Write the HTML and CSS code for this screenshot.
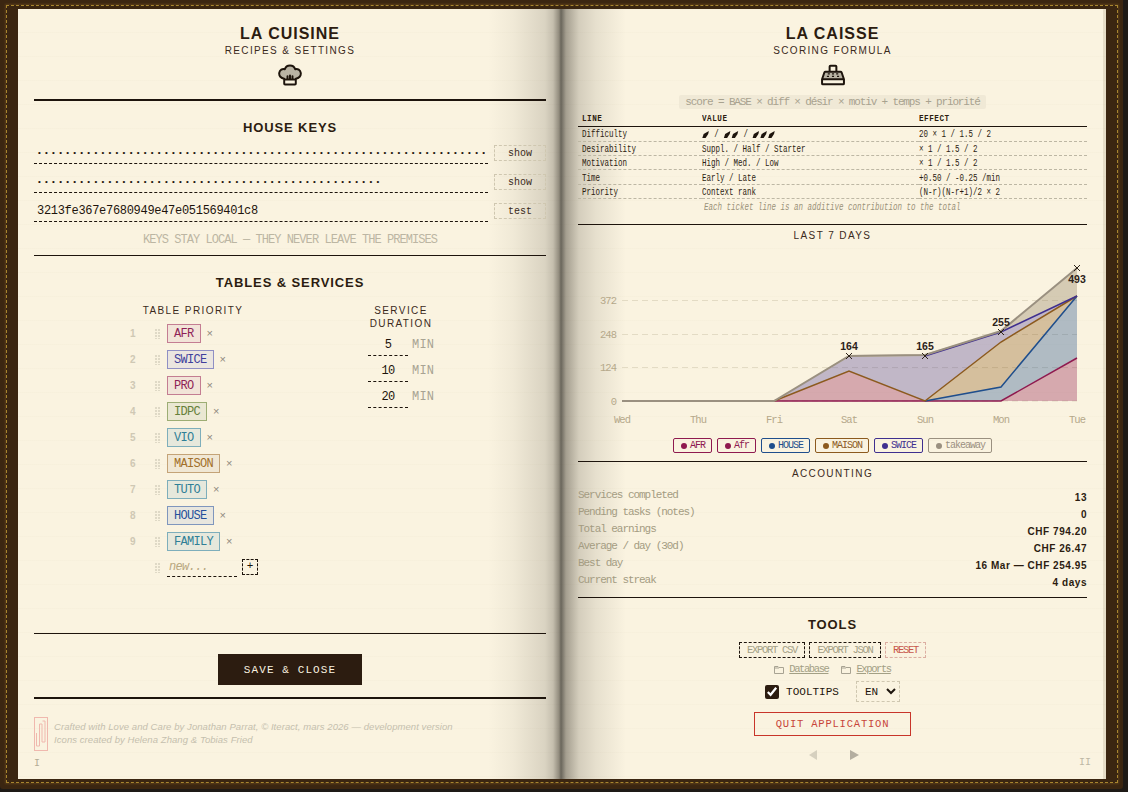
FILE: index.html
```html
<!DOCTYPE html>
<html lang="en">
<head>
<meta charset="utf-8">
<title>La Cuisine / La Caisse</title>
<link rel="stylesheet" href="styles.css">
</head>
<body>
<div class="book">
  <div class="stitch"></div>
  <div class="paper">
    <section class="page page-left">
      <h1 class="title">LA CUISINE</h1>
      <p class="subtitle">RECIPES &amp; SETTINGS</p>
      <svg class="page-icon" viewBox="12 22 232 204" width="24" height="24">
        <path class="band" d="M72 160H184V208A8 8 0 0 1 176 216H80A8 8 0 0 1 72 208Z"/>
        <path class="duo" d="M72 160C40 156 20 132 24 104C28 76 54 60 78 68C86 42 106 32 128 32C150 32 170 42 178 68C202 60 228 76 232 104C236 132 216 156 184 160Z"/>
        <path class="ico" d="M72 160C40 156 20 132 24 104C28 76 54 60 78 68C86 42 106 32 128 32C150 32 170 42 178 68C202 60 228 76 232 104C236 132 216 156 184 160V208A8 8 0 0 1 176 216H80A8 8 0 0 1 72 208ZM72 168H184M104 136V160M128 128V160M152 136V160"/>
      </svg>
      <div class="rule-thick"></div>

      <h2 class="section-head keys-head">HOUSE KEYS</h2>
      <div class="keys">
        <div class="key-row">
          <input class="key-input key-secret" type="password" value="aaaaaaaaaaaaaaaaaaaaaaaaaaaaaaaaaaaaaaaaaaaaaaaaaaaaaaaaaaaaaaaa">
          <button class="key-btn">show</button>
        </div>
        <div class="key-row">
          <input class="key-input key-secret" type="password" value="aaaaaaaaaaaaaaaaaaaaaaaaaaaaaaaaaaaaaaaaaaaaaaaaa">
          <button class="key-btn">show</button>
        </div>
        <div class="key-row">
          <input class="key-input" type="text" value="3213fe367e7680949e47e051569401c8">
          <button class="key-btn">test</button>
        </div>
      </div>
      <p class="keys-note">KEYS STAY LOCAL — THEY NEVER LEAVE THE PREMISES</p>
      <div class="rule-thin keys-rule"></div>

      <h2 class="section-head tables-head">TABLES &amp; SERVICES</h2>
      <div class="tables">
        <div class="priority">
          <h3 class="mini-head">TABLE PRIORITY</h3>
          <ol class="prio-list">
            <li class="prio-row"><span class="num">1</span><span class="grip"></span><span class="tag c-afr">AFR</span><span class="x">×</span></li>
            <li class="prio-row"><span class="num">2</span><span class="grip"></span><span class="tag c-swice">SWICE</span><span class="x">×</span></li>
            <li class="prio-row"><span class="num">3</span><span class="grip"></span><span class="tag c-afr">PRO</span><span class="x">×</span></li>
            <li class="prio-row"><span class="num">4</span><span class="grip"></span><span class="tag c-idpc">IDPC</span><span class="x">×</span></li>
            <li class="prio-row"><span class="num">5</span><span class="grip"></span><span class="tag c-teal">VIO</span><span class="x">×</span></li>
            <li class="prio-row"><span class="num">6</span><span class="grip"></span><span class="tag c-maison">MAISON</span><span class="x">×</span></li>
            <li class="prio-row"><span class="num">7</span><span class="grip"></span><span class="tag c-teal">TUTO</span><span class="x">×</span></li>
            <li class="prio-row"><span class="num">8</span><span class="grip"></span><span class="tag c-house">HOUSE</span><span class="x">×</span></li>
            <li class="prio-row"><span class="num">9</span><span class="grip"></span><span class="tag c-teal">FAMILY</span><span class="x">×</span></li>
            <li class="prio-row"><span class="num"></span><span class="grip"></span><input class="new-input" placeholder="new..."><button class="add-btn">+</button></li>
          </ol>
        </div>
        <div class="durations">
          <h3 class="mini-head">SERVICE<br>DURATION</h3>
          <div class="dur-list">
            <div class="dur-row"><input class="dur-input" value="5"><span class="dur-unit">MIN</span></div>
            <div class="dur-row"><input class="dur-input" value="10"><span class="dur-unit">MIN</span></div>
            <div class="dur-row"><input class="dur-input" value="20"><span class="dur-unit">MIN</span></div>
          </div>
        </div>
      </div>
      <div class="rule-thin save-rule"></div>
      <button class="save-btn">SAVE &amp; CLOSE</button>
      <div class="rule-thick foot-rule"></div>
      <footer class="credits">
        <svg class="logo" viewBox="0 0 14 34" width="14" height="34">
          <rect x="0.5" y="0.5" width="13" height="33"/>
          <path d="M5.5 7V29H2.5V16M5.5 7H8V25H11V4H8.5"/>
        </svg>
        <p class="credit-text">Crafted with Love and Care by Jonathan Parrat, © Iteract, mars 2026 — development version<br>Icons created by Helena Zhang &amp; Tobias Fried</p>
      </footer>
      <div class="folio">I</div>
    </section>

    <section class="page page-right">
      <h1 class="title">LA CAISSE</h1>
      <p class="subtitle">SCORING FORMULA</p>
      <svg class="page-icon" viewBox="14 30 228 196" width="24" height="24">
        <path class="band" d="M24 168H232V208A8 8 0 0 1 224 216H32A8 8 0 0 1 24 208Z"/>
        <path class="duo" d="M56 96H200L232 168H24Z"/>
        <path class="ico" d="M56 96H200C206 96 208 100 210 104L232 168V208A8 8 0 0 1 224 216H32A8 8 0 0 1 24 208V168L46 104C48 100 50 96 56 96ZM24 168H232M96 96V48A8 8 0 0 1 104 40H152A8 8 0 0 1 160 48V96"/>
        <path class="keys-dots" d="M78 112h20v12h-20zM118 112h20v12h-20zM158 112h20v12h-20zM70 136h20v12h-20zM118 136h20v12h-20zM166 136h20v12h-20z"/>
      </svg>
      <div class="formula-wrap"><code class="formula">score = BASE × diff × désir × motiv + temps + priorité</code></div>

      <table class="score">
        <thead>
          <tr><th><span>LINE</span></th><th><span>VALUE</span></th><th><span>EFFECT</span></th></tr>
        </thead>
        <tbody>
          <tr><td><span>Difficulty</span></td><td><span><svg class="pep" viewBox="0 0 11 7" width="12" height="7"><path d="M0 7L2 3L10 0L9 3L5 7Z"/></svg> / <svg class="pep" viewBox="0 0 11 7" width="12" height="7"><path d="M0 7L2 3L10 0L9 3L5 7Z"/></svg><svg class="pep" viewBox="0 0 11 7" width="12" height="7"><path d="M0 7L2 3L10 0L9 3L5 7Z"/></svg> / <svg class="pep" viewBox="0 0 11 7" width="12" height="7"><path d="M0 7L2 3L10 0L9 3L5 7Z"/></svg><svg class="pep" viewBox="0 0 11 7" width="12" height="7"><path d="M0 7L2 3L10 0L9 3L5 7Z"/></svg><svg class="pep" viewBox="0 0 11 7" width="12" height="7"><path d="M0 7L2 3L10 0L9 3L5 7Z"/></svg></span></td><td><span>20 × 1 / 1.5 / 2</span></td></tr>
          <tr><td><span>Desirability</span></td><td><span>Suppl. / Half / Starter</span></td><td><span>× 1 / 1.5 / 2</span></td></tr>
          <tr><td><span>Motivation</span></td><td><span>High / Med. / Low</span></td><td><span>× 1 / 1.5 / 2</span></td></tr>
          <tr><td><span>Time</span></td><td><span>Early / Late</span></td><td><span>+0.50 / -0.25 /min</span></td></tr>
          <tr><td><span>Priority</span></td><td><span>Context rank</span></td><td><span>(N-r)(N-r+1)/2 × 2</span></td></tr>
        </tbody>
      </table>
      <p class="score-note"><span>Each ticket line is an additive contribution to the total</span></p>
      <div class="rule-thin note-rule"></div>

      <h3 class="mini-head week-head">LAST 7 DAYS</h3>
      <svg class="chart" viewBox="578 242 509 190" width="509" height="190">
        <g class="grid">
          <line x1="622" x2="1077" y1="300.5" y2="300.5"/>
          <line x1="622" x2="1077" y1="334.5" y2="334.5"/>
          <line x1="622" x2="1077" y1="367.5" y2="367.5"/>
          <line x1="622" x2="1077" y1="401" y2="401"/>
        </g>
        <g class="ax">
          <text x="616" y="304" text-anchor="end">372</text>
          <text x="616" y="338" text-anchor="end">248</text>
          <text x="616" y="371" text-anchor="end">124</text>
          <text x="616" y="405" text-anchor="end">0</text>
          <text x="622" y="423" text-anchor="middle">Wed</text>
          <text x="698" y="423" text-anchor="middle">Thu</text>
          <text x="774" y="423" text-anchor="middle">Fri</text>
          <text x="849" y="423" text-anchor="middle">Sat</text>
          <text x="925" y="423" text-anchor="middle">Sun</text>
          <text x="1001" y="423" text-anchor="middle">Mon</text>
          <text x="1077" y="423" text-anchor="middle">Tue</text>
        </g>
        <polygon class="f-afr" points="622,401 1001,401 1077,358 1077,401"/>
        <polygon class="f-afr" points="774,401 849,371 925,401"/>
        <polygon class="f-house" points="925,401 1001,387 1077,296 1077,358 1001,401"/>
        <polygon class="f-maison" points="925,401 1001,342 1077,296 1001,387"/>
        <polygon class="f-swice" points="774,401 849,357 925,356 1001,332 1077,296 1001,342 925,401 849,371"/>
        <polygon class="f-take" points="774,401 849,355 925,354 1001,331 1077,268 1077,296 1001,332 925,356 849,357"/>
        <polyline class="l-afr" points="622,401 1001,401 1077,358"/>
        <polyline class="l-house" points="925,401 1001,387 1077,296"/>
        <polyline class="l-maison" points="774,401 849,371 925,401 1001,342 1077,296"/>
        <polyline class="l-swice" points="925,356 1001,332 1077,296"/>
        <polyline class="l-take" points="622,401 774,401 849,356 925,355 1001,331 1077,268"/>
        <g class="marks">
          <path d="M846 353L852 359M852 353L846 359"/>
          <path d="M922 353L928 359M928 353L922 359"/>
          <path d="M998 329L1004 335M1004 329L998 335"/>
          <path d="M1074 265L1080 271M1080 265L1074 271"/>
        </g>
        <g class="vals">
          <text x="849" y="350" text-anchor="middle">164</text>
          <text x="925" y="350" text-anchor="middle">165</text>
          <text x="1001" y="326" text-anchor="middle">255</text>
          <text x="1077" y="283" text-anchor="middle">493</text>
        </g>
      </svg>

      <ul class="legend">
        <li class="leg l1"><i></i>AFR</li>
        <li class="leg l1"><i></i>Afr</li>
        <li class="leg l2"><i></i>HOUSE</li>
        <li class="leg l3"><i></i>MAISON</li>
        <li class="leg l4"><i></i>SWICE</li>
        <li class="leg l5"><i></i>takeaway</li>
      </ul>
      <div class="rule-thin legend-rule"></div>

      <h3 class="mini-head acc-head">ACCOUNTING</h3>
      <dl class="accounts">
        <div class="acc-row"><dt>Services completed</dt><dd>13</dd></div>
        <div class="acc-row"><dt>Pending tasks (notes)</dt><dd>0</dd></div>
        <div class="acc-row"><dt>Total earnings</dt><dd>CHF 794.20</dd></div>
        <div class="acc-row"><dt>Average / day (30d)</dt><dd>CHF 26.47</dd></div>
        <div class="acc-row"><dt>Best day</dt><dd>16 Mar — CHF 254.95</dd></div>
        <div class="acc-row"><dt>Current streak</dt><dd>4 days</dd></div>
      </dl>
      <div class="rule-thin acc-rule"></div>

      <h2 class="section-head tools-head">TOOLS</h2>
      <div class="tool-btns">
        <button class="tool-btn">EXPORT CSV</button>
        <button class="tool-btn">EXPORT JSON</button>
        <button class="tool-btn reset">RESET</button>
      </div>
      <div class="links">
        <a class="link"><svg viewBox="0 0 10 9" width="10" height="9"><path d="M0.5 8.5V1.5H4L5 2.5H9.5V8.5ZM0.5 3H5"/></svg><span>Database</span></a>
        <a class="link"><svg viewBox="0 0 10 9" width="10" height="9"><path d="M0.5 8.5V1.5H4L5 2.5H9.5V8.5ZM0.5 3H5"/></svg><span>Exports</span></a>
      </div>
      <div class="prefs">
        <label class="tips"><input class="tips-check" type="checkbox" checked>TOOLTIPS</label>
        <select class="lang"><option>EN</option><option>FR</option></select>
      </div>
      <button class="quit-btn">QUIT APPLICATION</button>
      <div class="nav">
        <span class="arrow prev"></span>
        <span class="arrow next"></span>
      </div>
      <div class="folio folio-right">II</div>
    </section>
  </div>
</div>
</body>
</html>
```

FILE: styles.css
```css
* { box-sizing: border-box; }
html, body { margin: 0; padding: 0; }
body {
  width: 1128px;
  height: 792px;
  overflow: hidden;
  background: #1e1a16;
  color: #2c1c10;
  font-family: "Liberation Sans", Arial, sans-serif;
}
h1, h2, h3, p, ol, ul, dl, dd { margin: 0; padding: 0; list-style: none; }
button, input, select { font-family: "Liberation Mono", monospace; }

.book {
  position: relative;
  width: 1123px;
  height: 789px;
  padding: 9px 17px 10px 18px;
  background: #3b2611;
  border-radius: 0 0 3px 3px;
}
.stitch {
  position: absolute;
  left: 6px; top: 5px; right: 5px; bottom: 6px;
  border: 1px dashed #a8862f;
  box-shadow: 0 0 2px 1px rgba(150, 105, 40, .35);
  pointer-events: none;
}
.paper {
  position: relative;
  display: flex;
  height: 770px;
  background-color: #faf3e0;
  background-image: repeating-linear-gradient(to bottom, transparent 0 23px, rgba(120, 100, 60, .02) 23px 24px);
}
.page { position: relative; display: flex; flex-direction: column; height: 770px; }
.page-left {
  width: 543px;
  padding: 15px 15px 0 16px;
  background-image: linear-gradient(to right, rgba(60, 55, 45, 0) 470px, rgba(60, 55, 45, .05) 495px, rgba(60, 55, 45, .17) 527px, rgba(60, 55, 45, .28) 535px, rgba(60, 55, 45, .55) 541px, rgba(50, 47, 40, .72) 543px);
}
.page-right {
  width: 545px;
  padding: 15px 19px 0 17px;
  background-image:
    linear-gradient(to right, rgba(50, 47, 40, .72) 0, rgba(60, 55, 45, .45) 5px, rgba(60, 55, 45, .2) 18px, rgba(60, 55, 45, .1) 35px, rgba(60, 55, 45, 0) 65px),
    linear-gradient(to left, rgba(110, 90, 50, .14) 3px, transparent 3px);
}

/* headings */
.title {
  font-size: 16px;
  line-height: 20px;
  letter-spacing: 1px;
  font-weight: 700;
  text-align: center;
  color: #2c1c10;
}
.subtitle {
  margin-top: 1px;
  font-size: 10px;
  line-height: 12px;
  letter-spacing: 1.35px;
  text-align: center;
  color: #3a2a1c;
}
.page-icon { display: block; margin: 6px auto 0; flex: none; }
.ico { fill: none; stroke: #1d140c; stroke-width: 19; stroke-linejoin: round; stroke-linecap: round; }
.duo { fill: #b9b3a4; }
.band { fill: #faf3e0; }
.keys-dots { fill: #1d140c; }

.rule-thick { height: 2px; background: #1d140c; flex: none; margin-top: 12px; }
.rule-thin { height: 1px; background: #1d140c; flex: none; }

.section-head {
  font-size: 13px;
  line-height: 16px;
  letter-spacing: .9px;
  font-weight: 700;
  text-align: center;
  color: #2c1c10;
}
.keys-head { margin-top: 19px; }
.mini-head {
  font-size: 10px;
  line-height: 13px;
  font-weight: 400;
  letter-spacing: 1.4px;
  text-align: center;
  color: #3a2a1c;
}

/* keys */
.keys { display: flex; flex-direction: column; gap: 10px; margin-top: 9px; }
.key-row { display: flex; gap: 6px; height: 19px; align-items: flex-start; }
.key-input {
  flex: 1;
  min-width: 0;
  height: 19px;
  padding: 0 3px 2px;
  border: 0;
  border-bottom: 1px dashed #1d140c;
  background: transparent;
  color: #1d140c;
  font-size: 12px;
  letter-spacing: -.3px;
  outline: none;
}
.key-secret { font-size: 8px; letter-spacing: 2.25px; padding-bottom: 3px; }
.key-btn {
  width: 52px;
  height: 16px;
  padding: 0;
  border: 1px dashed #cfc7b0;
  background: transparent;
  color: #3a2a1c;
  font-size: 10px;
  letter-spacing: 0;
}
.keys-note {
  margin-top: 12px;
  font-family: "Liberation Mono", monospace;
  font-size: 12px;
  line-height: 12px;
  letter-spacing: -.95px;
  text-align: center;
  color: #bcb6a3;
}
.keys-rule { margin-top: 9px; }
.tables-head { margin-top: 19px; }

/* tables */
.tables { display: flex; margin-top: 13px; padding-left: 89px; gap: 97px; align-items: flex-start; }
.priority { width: 140px; }
.prio-list { display: flex; flex-direction: column; gap: 7px; margin-top: 7px; }
.prio-row { display: flex; align-items: center; height: 19px; }
.num {
  width: 32px;
  padding-left: 7px;
  font-size: 10px;
  font-weight: 700;
  color: #cfc8b4;
  flex: none;
}
.grip {
  width: 6px;
  height: 10px;
  margin-right: 6px;
  flex: none;
  background-image: radial-gradient(circle at 1px 1px, #dfd9c6 1px, transparent 1px);
  background-size: 3px 3px;
}
.tag {
  display: block;
  height: 19px;
  padding: 0 6px;
  border: 1px solid;
  font-family: "Liberation Mono", monospace;
  font-size: 12px;
  line-height: 18px;
  letter-spacing: -.7px;
}
.c-afr { color: #8f1f56; border-color: #c47d92; background: #f2e4d8; }
.c-swice { color: #3f3f9c; border-color: #9090c4; background: #ebe6e0; }
.c-idpc { color: #66803a; border-color: #9dad74; background: #eae7d2; }
.c-teal { color: #2f7f96; border-color: #7eaebb; background: #e6e8dc; }
.c-maison { color: #a2702a; border-color: #c4a377; background: #f0e7d4; }
.c-house { color: #25509b; border-color: #7f96bd; background: #e8e6de; }
.x { margin-left: 6px; font-size: 11px; color: #8f8a7d; line-height: 1; }
.new-input {
  width: 70px;
  height: 19px;
  padding: 0 2px;
  border: 0;
  border-bottom: 1px dashed #1d140c;
  background: transparent;
  font-size: 12px;
  font-style: italic;
  letter-spacing: -.7px;
  outline: none;
}
.new-input::placeholder { color: #b8a77f; opacity: 1; }
.add-btn {
  width: 16px;
  height: 16px;
  margin: 0 0 2px 5px;
  padding: 0;
  border: 1px dashed #1d140c;
  background: transparent;
  font-size: 11px;
  line-height: 13px;
  color: #1d140c;
}
.durations { width: 82px; }
.dur-list { display: flex; flex-direction: column; gap: 7px; margin-top: 7px; }
.dur-row { display: flex; align-items: flex-start; padding-left: 8px; height: 19px; }
.dur-input {
  width: 40px;
  height: 19px;
  padding: 0 0 2px;
  border: 0;
  border-bottom: 1px dashed #1d140c;
  background: transparent;
  text-align: center;
  font-size: 12px;
  letter-spacing: -.7px;
  color: #1d140c;
  outline: none;
}
.dur-unit {
  margin-left: 4px;
  font-family: "Liberation Mono", monospace;
  font-size: 12px;
  line-height: 17px;
  letter-spacing: .2px;
  color: #a8a393;
}
.save-rule { margin-top: 56px; }
.save-btn {
  display: block;
  width: 144px;
  height: 31px;
  margin: 20px auto 0;
  padding: 0;
  border: 0;
  background: #2c1c10;
  color: #faf3e0;
  font-size: 11px;
  font-weight: 400;
  letter-spacing: 1.1px;
  flex: none;
}
.foot-rule { margin-top: 12px; }
.credits { display: flex; gap: 6px; margin-top: 18px; }
.logo { flex: none; }
.logo rect, .logo path { fill: none; stroke: #f0b8ae; stroke-width: 1; }
.credit-text {
  padding-top: 3px;
  font-size: 9.5px;
  line-height: 13px;
  letter-spacing: .07px;
  font-style: italic;
  color: #c5bfae;
  white-space: nowrap;
}
.folio {
  margin-top: 7px;
  font-family: "Liberation Mono", monospace;
  font-size: 10px;
  line-height: 12px;
  letter-spacing: 2px;
  color: #b3ab94;
}
.folio-right { position: absolute; right: 15px; bottom: 10px; margin: 0; letter-spacing: 0; color: #bdb7a4; }

/* right page */
.formula-wrap { display: flex; justify-content: center; margin-top: 8px; flex: none; }
.formula {
  height: 14px;
  padding: 0 6px;
  border-radius: 2px;
  background: #f0e9d6;
  font-family: "Liberation Mono", monospace;
  font-size: 11px;
  line-height: 14px;
  letter-spacing: -1.15px;
  color: #a8a28f;
  white-space: nowrap;
}
.score {
  width: 509px;
  margin-top: 3px;
  border-collapse: collapse;
  table-layout: fixed;
  font-family: "Liberation Mono", monospace;
  flex: none;
}
.score th:nth-child(1), .score td:nth-child(1) { width: 124px; padding-left: 4px; }
.score th:nth-child(2), .score td:nth-child(2) { width: 217px; }
.score th, .score td { padding: 0; text-align: left; white-space: nowrap; overflow: visible; }
.score th { height: 14px; border-bottom: 1px solid #1d140c; font-size: 9px; font-weight: 700; }
.score th span { display: inline-block; transform: scaleX(.85); transform-origin: left; letter-spacing: .6px; color: #2c1c10; }
.score td { height: 14px; border-bottom: 1px dashed #bdb7a4; font-size: 11.5px; line-height: 13px; color: #2c1c10; }
.score tbody tr:first-child td { height: 15px; }
.score td span { display: inline-block; transform: scaleX(.652); transform-origin: left; vertical-align: middle; }
.pep { vertical-align: -1px; fill: #1d140c; }
.score-note {
  height: 14px;
  margin-top: 1px;
  padding-left: 126px;
  font-family: "Liberation Mono", monospace;
  font-size: 11.5px;
  line-height: 14px;
  font-style: italic;
  color: #9a9279;
  white-space: nowrap;
}
.score-note span { display: inline-block; transform: scaleX(.652); transform-origin: left; }
.note-rule { margin-top: 10px; }
.week-head { margin-top: 5px; line-height: 12px; }
.chart { display: block; flex: none; }
.grid line { stroke: #e3dbc4; stroke-width: 1; stroke-dasharray: 6 4; }
.ax text { font-family: "Liberation Mono", monospace; font-size: 10.5px; letter-spacing: -.95px; fill: #b5a88a; }
.f-afr { fill: rgba(143, 26, 79, .34); }
.f-house { fill: rgba(31, 78, 140, .34); }
.f-maison { fill: rgba(140, 90, 30, .34); }
.f-swice { fill: rgba(63, 47, 143, .3); }
.f-take { fill: rgba(120, 100, 70, .28); }
.chart polyline { fill: none; stroke-width: 1.5; }
.l-afr { stroke: #8f1a4f; }
.l-house { stroke: #1f4e8c; }
.l-maison { stroke: #8c5a1e; }
.l-swice { stroke: #3f2f8f; }
.chart .l-take { stroke: #9a9080; stroke-width: 2; }
.marks path { stroke: #2c2218; stroke-width: 1; fill: none; }
.vals text { font-size: 10.5px; font-weight: 700; fill: #2c2218; }

.legend { display: flex; justify-content: center; gap: 5px; margin-top: 6px; height: 15px; flex: none; }
.leg {
  display: flex;
  align-items: center;
  gap: 3px;
  height: 15px;
  padding: 0 6px 0 7px;
  border: 1px solid;
  border-radius: 2px;
  font-family: "Liberation Mono", monospace;
  font-size: 10px;
  letter-spacing: -1px;
}
.leg i { width: 6px; height: 6px; border-radius: 50%; background: currentColor; flex: none; }
.l1 { color: #8f1a4f; }
.l2 { color: #1f4e8c; }
.l3 { color: #8c5a1e; }
.l4 { color: #3f2f8f; }
.l5 { color: #9a9080; }
.legend-rule { margin-top: 8px; }
.acc-head { margin-top: 6px; line-height: 12px; }
.accounts { margin-top: 9px; flex: none; }
.acc-row { display: flex; justify-content: space-between; align-items: flex-start; height: 17px; }
.acc-row dt {
  font-family: "Liberation Mono", monospace;
  font-size: 11px;
  line-height: 13px;
  letter-spacing: -1.05px;
  color: #a49c82;
}
.acc-row dd {
  padding-top: 2px;
  font-size: 10px;
  line-height: 14px;
  font-weight: 700;
  letter-spacing: .55px;
  color: #2c1c10;
}
.acc-rule { margin-top: 6px; }
.tools-head { margin-top: 19px; }
.tool-btns { display: flex; justify-content: center; gap: 4px; margin-top: 9px; flex: none; }
.tool-btn {
  height: 16px;
  padding: 0;
  width: 66px;
  border: 1px dashed #1d140c;
  background: transparent;
  font-size: 10.5px;
  letter-spacing: -1.3px;
  color: #a3a085;
}
.tool-btn:nth-child(2) { width: 72px; }
.tool-btn.reset { width: 41px; border-color: #dcaea2; color: #c8584c; }
.links { display: flex; justify-content: center; gap: 13px; margin-top: 4px; height: 14px; flex: none; }
.link {
  display: flex;
  align-items: center;
  gap: 5px;
  font-family: "Liberation Mono", monospace;
  font-size: 10.5px;
  letter-spacing: -1.4px;
  color: #a3a085;
}
.link span { text-decoration: underline; }
.link svg { fill: none; stroke: #a8a393; stroke-width: 1; }
.prefs { display: flex; justify-content: center; align-items: center; gap: 17px; margin-top: 5px; height: 21px; flex: none; }
.tips {
  display: flex;
  align-items: center;
  gap: 7px;
  font-family: "Liberation Mono", monospace;
  font-size: 11px;
  letter-spacing: 0;
  color: #1d140c;
}
.tips-check { width: 14px; height: 14px; margin: 0; accent-color: #2c1c10; }
.lang {
  width: 44px;
  height: 21px;
  padding: 0 0 0 4px;
  border: 1px dashed #cfc7b0;
  border-radius: 0;
  background: transparent;
  font-size: 11px;
  color: #1d140c;
}
.quit-btn {
  display: block;
  width: 157px;
  height: 24px;
  margin: 10px auto 0;
  padding: 0;
  border: 1px solid #c8352a;
  background: transparent;
  color: #c8453a;
  font-size: 10.5px;
  letter-spacing: .8px;
  flex: none;
}
.nav { display: flex; justify-content: center; gap: 33px; margin-top: 14px; height: 10px; padding-left: 2px; flex: none; }
.arrow { width: 0; height: 0; border-top: 5px solid transparent; border-bottom: 5px solid transparent; }
.prev { border-right: 8px solid #d6d0bf; }
.next { border-left: 9px solid #b4aea0; }
```
